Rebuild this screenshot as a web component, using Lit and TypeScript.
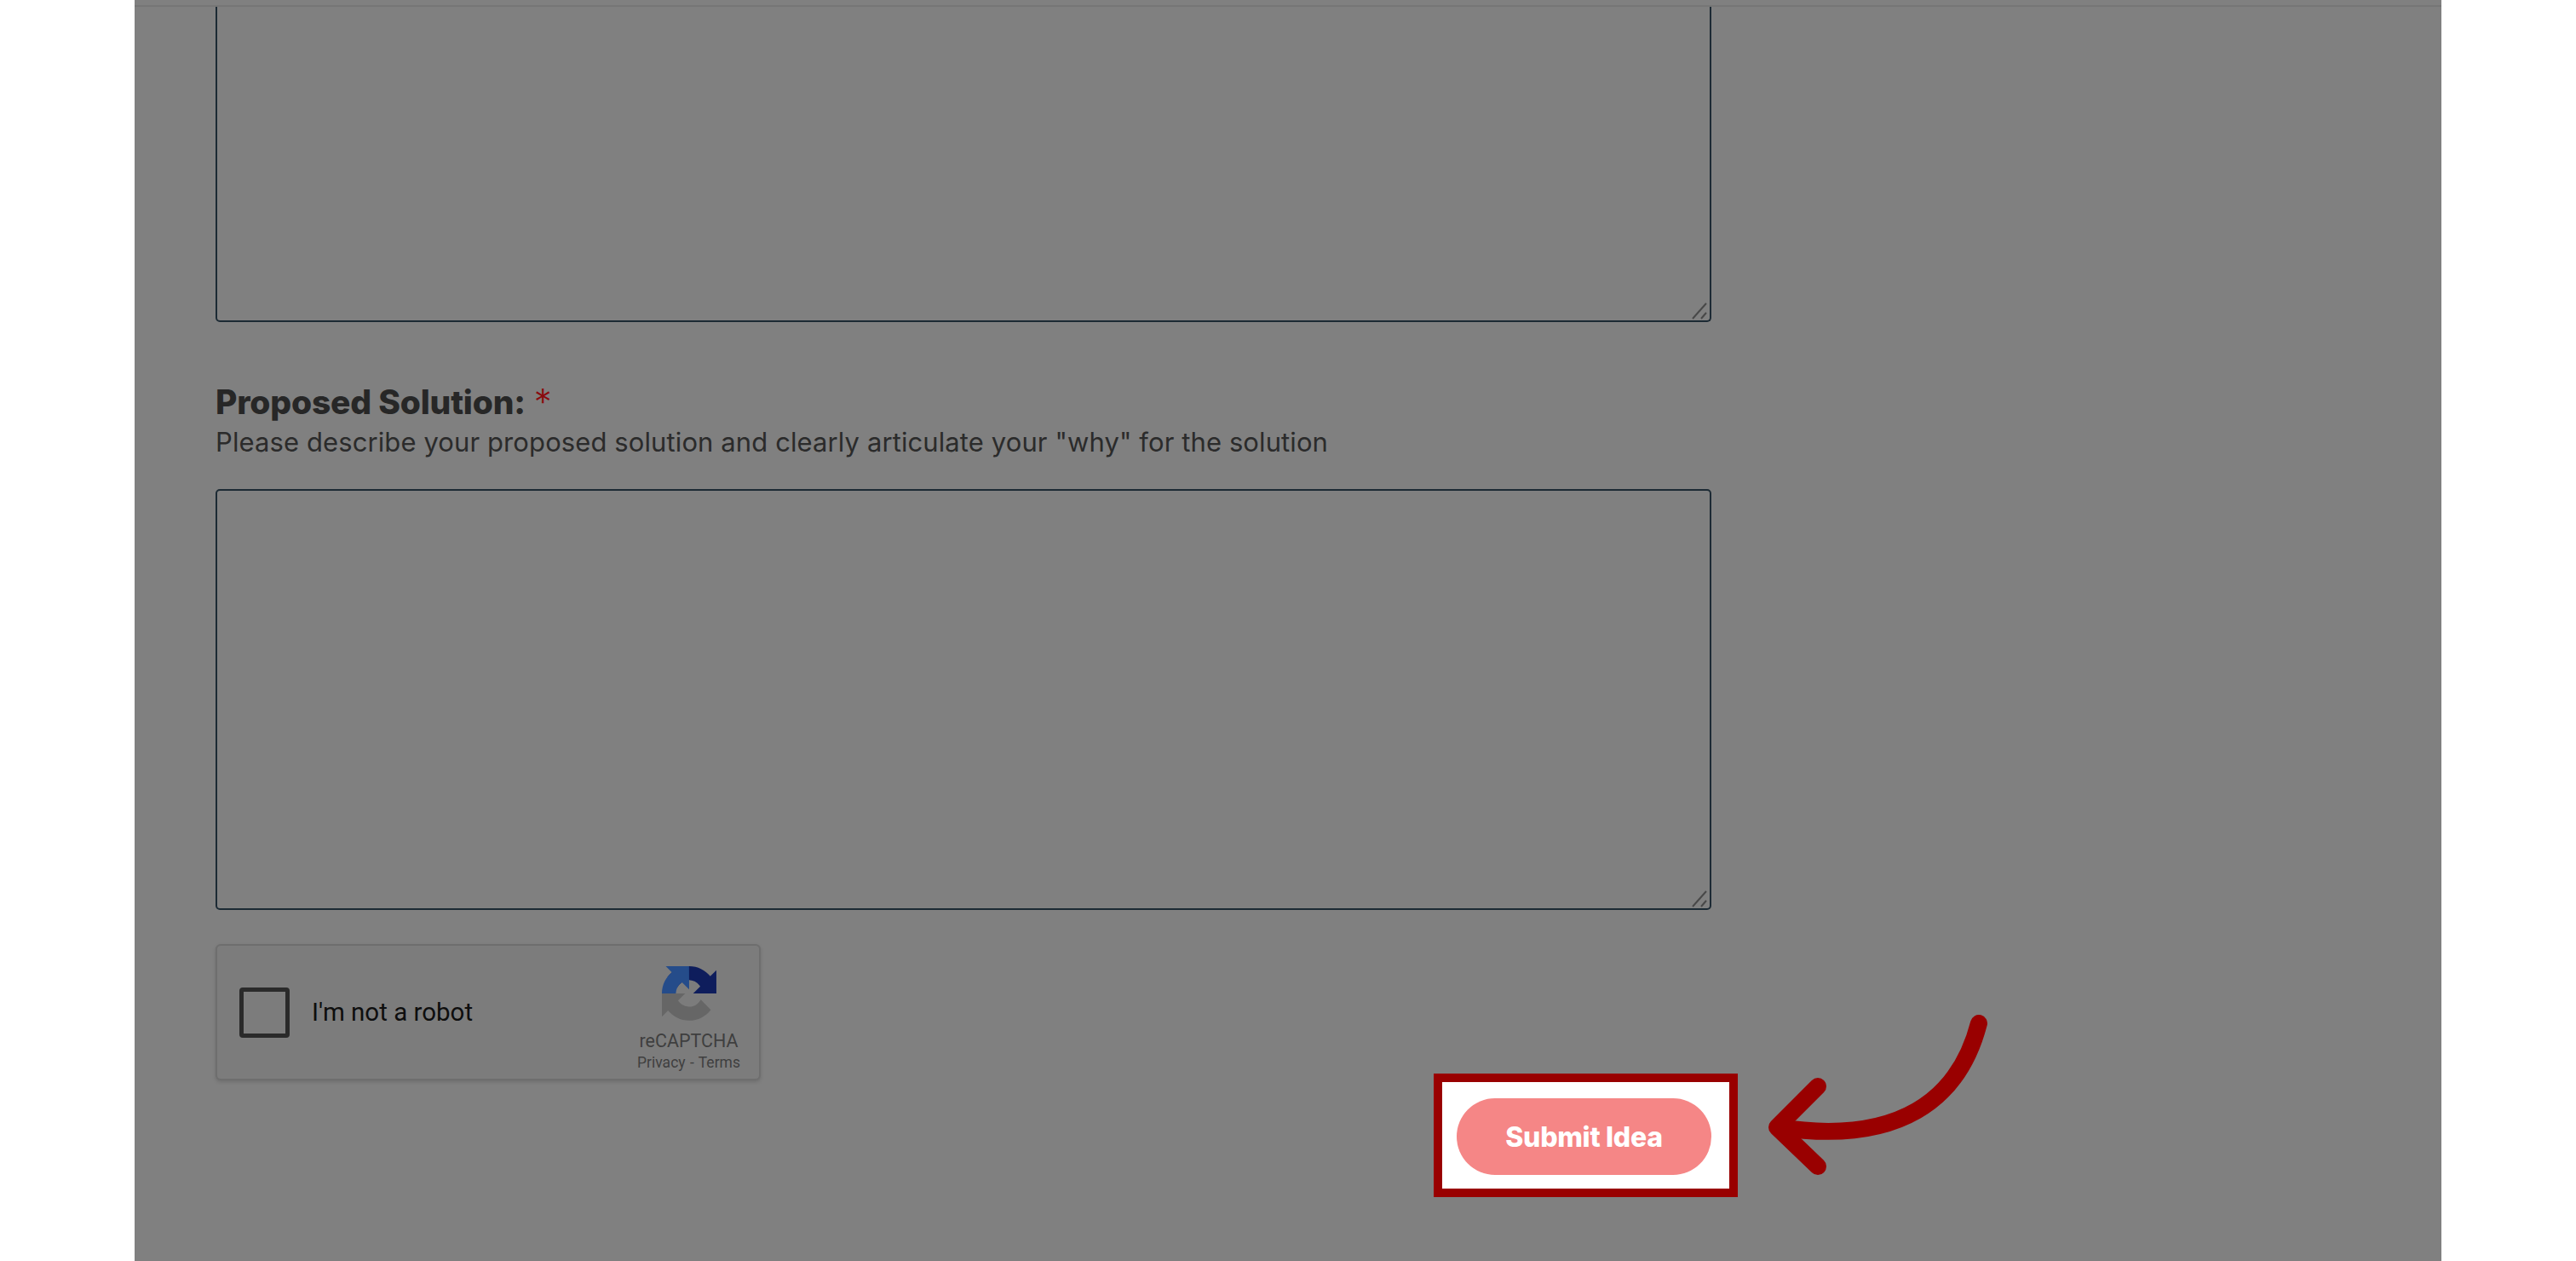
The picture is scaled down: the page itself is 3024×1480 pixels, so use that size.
import { LitElement, html, css } from "lit";
import { customElement } from "lit/decorators.js";

@customElement("app-root")
export class AppRoot extends LitElement {
  static styles = css`
    :host { display: block; width: 3024px; height: 1480px; background: #fff; overflow: hidden; font-family: "Inter", "Liberation Sans", sans-serif; }
    .panel { position: relative; width: 2708px; height: 1480px; margin-left: 158px; background: #808080; overflow: hidden; }
    .topline { height: 6px; border-bottom: 2px solid #767676; }
    .form { display: flex; flex-direction: column; width: 1756px; margin-left: 95px; }
    .area { position: relative; box-sizing: border-box; width: 100%; border: 2.5px solid #1c2a34; border-radius: 5px; background: transparent; }
    .area.first { height: 370px; border-top: none; border-radius: 0 0 5px 5px; }
    .area.second { height: 494px; }
    .grip { position: absolute; right: 0; bottom: 0; width: 24px; height: 24px; }
    .label { margin-top: 71px; display: flex; align-items: flex-start; gap: 10px; font-size: 39px; line-height: 46px; font-weight: 800; letter-spacing: -0.2px; color: #272727; }
    .star { color: #8a0a0e; font-weight: 300; font-size: 42px; line-height: 46px; }
    .help { margin-top: 5px; margin-bottom: 36px; font-size: 31px; line-height: 38px; letter-spacing: 0.1px; color: #2b2b2b; white-space: nowrap; }
    .captcha { display: flex; align-items: center; box-sizing: border-box; width: 640px; height: 160px; margin-top: 40px; padding-left: 26px; background: #7c7c7c; border: 2px solid #6e6e6e; border-radius: 6px; box-shadow: 0 2px 4px rgba(0,0,0,.15); font-family: "Roboto", sans-serif; }
    .check { box-sizing: border-box; width: 59px; height: 59px; border: 5px solid #2a2a2a; border-radius: 4px; }
    .robot { margin-left: 26px; font-size: 29.5px; color: #0e0e0e; }
    .brand { margin-left: auto; width: 137px; margin-right: 14px; padding-top: 16px; display: flex; flex-direction: column; align-items: center; color: #3f3f3f; white-space: nowrap; }
    .brand svg { width: 64px; height: 64px; }
    .brand .name { margin-top: 11px; font-size: 21.5px; line-height: 26px; }
    .brand .links { font-size: 17.5px; line-height: 22px; margin-top: 1px; word-spacing: 1px; }
    .actions { display: flex; justify-content: flex-end; margin-top: 21px; }
    .target { position: relative; }
    .highlight { position: absolute; left: -27px; right: -31px; top: -29px; bottom: -26px; box-sizing: border-box; background: #fff; border: 10px solid #990000; }
    .submit { position: relative; display: block; width: 299px; height: 90px; border: none; border-radius: 45px; background: #f58686; color: #fff; font-family: inherit; font-size: 32px; font-weight: 800; letter-spacing: -0.3px; }
    .arrow { position: absolute; left: 0; top: 0; width: 2708px; height: 1480px; pointer-events: none; }
  `;

  private grip() {
    return html`<svg class="grip" viewBox="0 0 24 24" fill="none" stroke="#484848" stroke-width="2">
      <path d="M4 22 L20 4" /><path d="M14 22 L20 15" />
    </svg>`;
  }

  render() {
    return html`<div class="panel">
      <div class="topline"></div>
      <div class="form">
        <div class="area first">${this.grip()}</div>
        <div class="label"><span>Proposed Solution:</span><span class="star">*</span></div>
        <div class="help">Please describe your proposed solution and clearly articulate your "why" for the solution</div>
        <div class="area second">${this.grip()}</div>
        <div class="captcha">
          <div class="check"></div>
          <div class="robot">I'm not a robot</div>
          <div class="brand">
            <svg viewBox="0 0 64 64">
              <path fill="#0e1d5c" d="M64 31.955l-.033-1.37V4.687l-7.16 7.16C50.948 4.674 42.033.093 32.05.093c-10.4 0-19.622 4.96-25.458 12.64l11.736 11.86a15.55 15.55 0 0 1 4.754-5.334c2.05-1.6 4.952-2.906 8.968-2.906.485 0 .86.057 1.135.163 4.976.393 9.288 3.14 11.828 7.124l-8.307 8.307 26.3.004"/>
              <path fill="#254c8a" d="M31.862 0l-1.37.033H4.594l7.16 7.16C4.58 13.054 0 21.97 0 31.953h16.4c0-.485.057-.86.163-1.135.393-4.976 3.14-9.288 7.124-11.828l8.307 8.307L31.862 0"/>
              <path fill="#666666" d="M.001 31.955l.033 1.37v25.9l7.16-7.16c5.86 7.173 14.775 11.754 24.76 11.754 10.4 0 19.622-4.96 25.458-12.64l-11.736-11.86c-1.125 2.08-2.724 3.867-4.754 5.334-2.05 1.6-4.952 2.906-8.968 2.906-.485 0-.86-.057-1.135-.163-4.976-.393-9.288-3.14-11.828-7.124l8.307-8.307-26.3-.004"/>
            </svg>
            <div class="name">reCAPTCHA</div>
            <div class="links">Privacy - Terms</div>
          </div>
        </div>
        <div class="actions">
          <div class="target">
            <div class="highlight"></div>
            <button class="submit">Submit Idea</button>
          </div>
        </div>
      </div>
      <svg class="arrow" viewBox="0 0 2708 1480" fill="none" stroke="#990000" stroke-width="20" stroke-linecap="round" stroke-linejoin="round">
        <path d="M2165 1201 C2142 1290 2072 1345 1929 1323" />
        <path d="M1976 1275 L1928 1323 L1976 1369" />
      </svg>
    </div>`;
  }
}
